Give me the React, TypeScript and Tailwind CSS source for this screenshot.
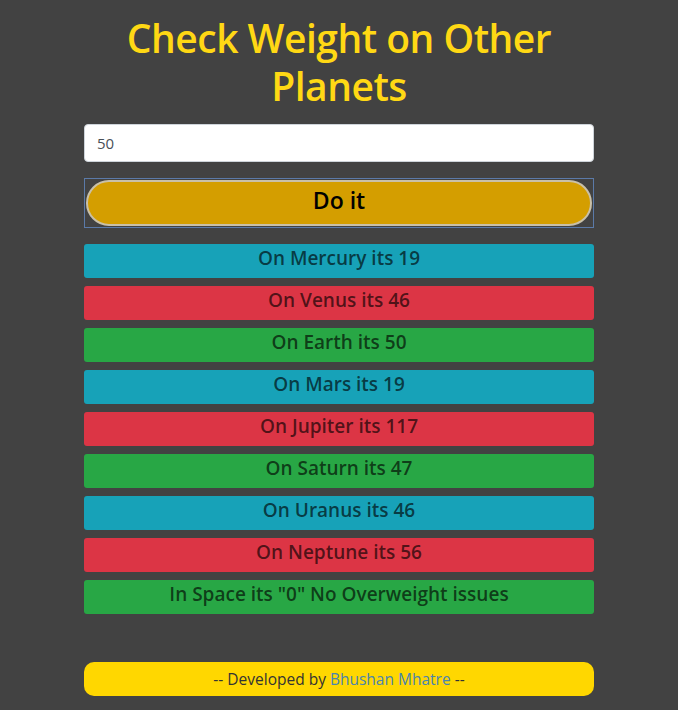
import React, { FC } from "react";

interface Row {
  label: string;
  bg: string;
}

const rows: Row[] = [
  { label: "On Mercury its 19", bg: "bg-[#17a2b8]" },
  { label: "On Venus its 46", bg: "bg-[#dc3545]" },
  { label: "On Earth its 50", bg: "bg-[#28a745]" },
  { label: "On Mars its 19", bg: "bg-[#17a2b8]" },
  { label: "On Jupiter its 117", bg: "bg-[#dc3545]" },
  { label: "On Saturn its 47", bg: "bg-[#28a745]" },
  { label: "On Uranus its 46", bg: "bg-[#17a2b8]" },
  { label: "On Neptune its 56", bg: "bg-[#dc3545]" },
  { label: 'In Space its "0" No Overweight issues', bg: "bg-[#28a745]" },
];

const App: FC = () => {
  return (
    <div className="min-h-[710px] bg-[#424242] font-['Open_Sans',sans-serif]">
      <div className="mx-auto w-[510px] pt-[14px] pb-[14px]">
        <h1 className="text-center text-[39px] leading-[48px] font-semibold text-[#ffd814] tracking-[-0.5px]">
          Check Weight on Other Planets
        </h1>
        <input
          className="mt-[14px] block h-[38px] w-full rounded-[4px] border border-[#ced4da] bg-white px-3 text-[15px] text-[#495057] outline-none"
          defaultValue="50"
        />
        <div className="mt-[16px] h-[50px] border border-[#5b7aa8] p-[1px]">
          <button className="h-full w-full rounded-full border-2 border-[#c9c0a8] bg-[#d49e00] pb-[5px] text-[23px] font-semibold text-black">
            Do it
          </button>
        </div>
        <div className="mt-[16px] flex flex-col gap-[8px]">
          {rows.map((r) => (
            <div
              key={r.label}
              className={`${r.bg} h-[34px] rounded-[3px] pb-[6px] text-center text-[19px] leading-[28px] font-semibold text-black/65`}
            >
              {r.label}
            </div>
          ))}
        </div>
        <div className="mt-[48px] h-[34px] rounded-[10px] bg-[#ffd700] text-center text-[15.5px] leading-[34px] text-[#333]">
          -- Developed by <span className="text-[#4a84b0]">Bhushan Mhatre</span> --
        </div>
      </div>
    </div>
  );
};

export default App;
